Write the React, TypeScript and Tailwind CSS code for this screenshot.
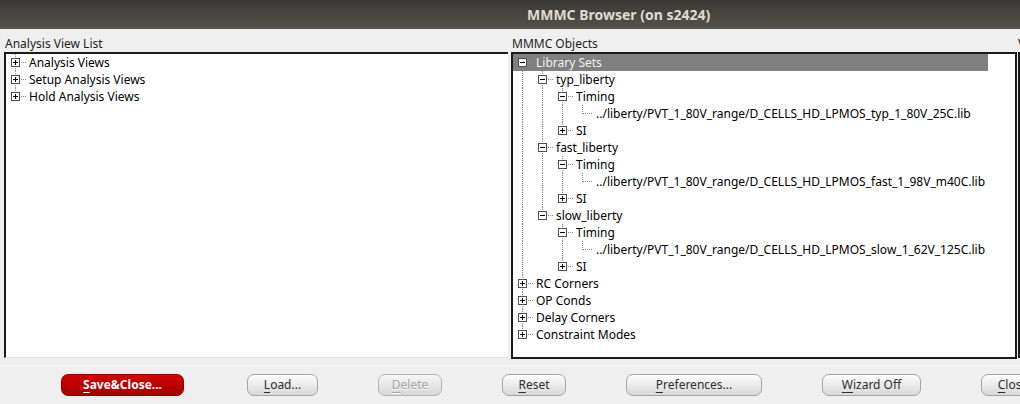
import React from 'react';

type TNode = { label: string; children?: TNode[]; open?: boolean; selected?: boolean };

const LIB = (c: string) => `../liberty/PVT_1_80V_range/D_CELLS_HD_LPMOS_${c}.lib`;

const libSet = (name: string, corner: string): TNode => ({
  label: name,
  open: true,
  children: [
    { label: 'Timing', open: true, children: [{ label: LIB(corner) }] },
    { label: 'SI', children: [{ label: '' }] },
  ],
});

const objects: TNode[] = [
  {
    label: 'Library Sets',
    open: true,
    selected: true,
    children: [
      libSet('typ_liberty', 'typ_1_80V_25C'),
      libSet('fast_liberty', 'fast_1_98V_m40C'),
      libSet('slow_liberty', 'slow_1_62V_125C'),
    ],
  },
  { label: 'RC Corners', children: [{ label: '' }] },
  { label: 'OP Conds', children: [{ label: '' }] },
  { label: 'Delay Corners', children: [{ label: '' }] },
  { label: 'Constraint Modes', children: [{ label: '' }] },
];

const views: TNode[] = [
  { label: 'Analysis Views', children: [{ label: '' }] },
  { label: 'Setup Analysis Views', children: [{ label: '' }] },
  { label: 'Hold Analysis Views', children: [{ label: '' }] },
];

type Flat = { node: TNode; depth: number; cont: boolean[]; hasNext: boolean };

function flatten(nodes: TNode[], depth: number, cont: boolean[], out: Flat[]) {
  nodes.forEach((n, i) => {
    const hasNext = i < nodes.length - 1;
    out.push({ node: n, depth, cont, hasNext });
    if (n.open && n.children) flatten(n.children, depth + 1, [...cont, hasNext], out);
  });
  return out;
}

const DOT = '#8a8a8a';

function AncestorCell({ on }: { on: boolean }) {
  return (
    <svg width={20} height={17} className="shrink-0 block">
      {on && <line x1={9.5} y1={0} x2={9.5} y2={17} stroke={DOT} strokeDasharray="1 1" />}
    </svg>
  );
}

function OwnCell({ hasNext, expander }: { hasNext: boolean; expander: 'plus' | 'minus' | null }) {
  return (
    <svg width={20} height={17} className="shrink-0 block">
      <line x1={9.5} y1={0} x2={9.5} y2={hasNext ? 17 : 9} stroke={DOT} strokeDasharray="1 1" />
      <line x1={expander ? 15 : 10} y1={8.5} x2={20} y2={8.5} stroke={DOT} strokeDasharray="1 1" />
      {expander && (
        <g>
          <rect x={5.5} y={4.5} width={8} height={8} fill="#ffffff" stroke="#505050" />
          <line x1={7} y1={8.5} x2={12} y2={8.5} stroke="#000" />
          {expander === 'plus' && <line x1={9.5} y1={6} x2={9.5} y2={11} stroke="#000" />}
        </g>
      )}
    </svg>
  );
}

function Tree({ nodes, rowWidth }: { nodes: TNode[]; rowWidth?: string }) {
  const rows = flatten(nodes, 0, [], []);
  return (
    <div className="flex flex-col">
      {rows.map((r, idx) => {
        const hasKids = !!r.node.children && r.node.children.length > 0;
        const exp = hasKids ? (r.node.open ? 'minus' : 'plus') : null;
        return (
          <div
            key={idx}
            className={`flex items-center h-[17px] whitespace-nowrap ${rowWidth ?? ''} ${
              r.node.selected ? 'bg-[#808080] text-[#f2f2f2]' : 'text-[#000000]'
            }`}
          >
            {r.cont.map((c, i) => (
              <AncestorCell key={i} on={c} />
            ))}
            <OwnCell hasNext={r.hasNext} expander={exp} />
            <span className="ml-[3px] leading-[17px]">{r.node.label}</span>
          </div>
        );
      })}
    </div>
  );
}

function Btn({
  w,
  children,
  disabled,
  primary,
  className,
}: {
  w: string;
  children: React.ReactNode;
  disabled?: boolean;
  primary?: boolean;
  className?: string;
}) {
  const base = 'h-[22px] shrink-0 rounded-[7px] border flex items-center justify-center text-[12px] leading-none';
  const style = primary
    ? 'border-[#8a0000] bg-linear-to-b from-[#d60000] to-[#a40000] text-white font-bold'
    : disabled
    ? 'border-[#b4b4b4] bg-linear-to-b from-[#f6f6f6] to-[#d6d6d6] text-[#a3a3a3] [text-shadow:0_1px_0_#ffffff]'
    : 'border-[#a3a3a3] bg-linear-to-b from-[#fdfdfd] to-[#d8d8d8] text-[#2e2e2e]';
  return <div className={`${base} ${style} ${w} ${className ?? ''}`}>{children}</div>;
}

const U = ({ c }: { c: string }) => <span className="underline underline-offset-[3px]">{c}</span>;

export default function App() {
  return (
    <div className="w-[1020px] h-[404px] overflow-hidden bg-[#efefef] font-['Noto_Sans',sans-serif] text-[12px] flex flex-col">
      <div className="h-[29px] shrink-0 bg-linear-to-b from-[#3a3935] to-[#55524b] flex items-center pl-[527px]">
        <span className="text-[14px] font-bold text-[#dfdbd2] whitespace-nowrap">MMMC Browser (on s2424)</span>
      </div>

      <div className="h-[330px] shrink-0 flex pl-[4px]">
        <div className="w-[504px] shrink-0 flex flex-col">
          <div className="h-[23px] flex items-end pl-[1px] text-[#1e1e1e] leading-[17px]">Analysis View List</div>
          <div className="h-[306px] bg-white border-t-2 border-l-2 border-b border-t-[#1b1b1b] border-l-[#1b1b1b] border-b-[#e2e2e2]">
            <Tree nodes={views} />
          </div>
        </div>

        <div className="w-[506px] shrink-0 ml-[3px] flex flex-col">
          <div className="h-[23px] flex items-end pl-[1px] text-[#1e1e1e] leading-[17px]">MMMC Objects</div>
          <div className="h-[307px] bg-white border-2 border-[#1b1b1b]">
            <Tree nodes={objects} rowWidth="w-[475px]" />
          </div>
        </div>

        <div className="w-[300px] shrink-0 ml-[1px] flex flex-col">
          <div className="h-[23px] flex items-end text-[#1e1e1e] leading-[17px]">View</div>
          <div className="h-[306px] bg-white border-t-2 border-l-2 border-[#1b1b1b]" />
        </div>
      </div>

      <div className="flex-1 flex flex-col">
        <div className="mt-[6px] border-t border-[#fafafa]" />
        <div className="flex pl-[61px] pt-[8px] gap-[60px]">
          <Btn w="w-[123px]" primary>
            <span>
              <U c="S" />ave&amp;Close...
            </span>
          </Btn>
          <Btn w="w-[71px]" className="ml-[3px]">
            <span>
              <U c="L" />oad...
            </span>
          </Btn>
          <Btn w="w-[64px]" disabled>
            <span>
              <U c="D" />elete
            </span>
          </Btn>
          <Btn w="w-[64px]">
            <span>
              <U c="R" />eset
            </span>
          </Btn>
          <Btn w="w-[136px]">
            <span>
              <U c="P" />references...
            </span>
          </Btn>
          <Btn w="w-[99px]">
            <span>
              <U c="W" />izard Off
            </span>
          </Btn>
          <Btn w="w-[64px]">
            <span>
              <U c="C" />lose
            </span>
          </Btn>
        </div>
      </div>
    </div>
  );
}
